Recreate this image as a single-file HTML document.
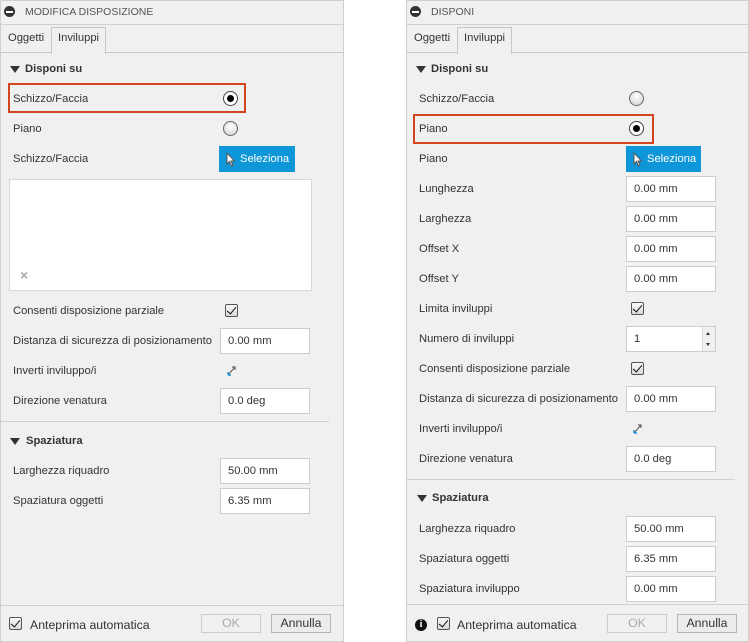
<!DOCTYPE html>
<html><head><meta charset="utf-8"><style>
*{box-sizing:border-box;margin:0;padding:0}
body{width:749px;height:642px;background:#fff;position:relative;overflow:hidden;font-family:"Liberation Sans",sans-serif;font-size:11.2px;color:#333}
.p{position:absolute;top:0;height:642px;background:#f0f0f0;border:1px solid #cfcfcf}
.a{position:absolute;white-space:nowrap}
.hl{position:absolute;height:1px;background:#d0d0d0}
.lbl{position:absolute;line-height:14px;white-space:nowrap}
.in{position:absolute;background:#fff;border:1px solid #cdcdcd;height:26px;line-height:24px;padding-left:7px;width:90px}
.rad{position:absolute;width:15px;height:15px;border-radius:50%;border:1px solid #666;background:radial-gradient(circle at 50% 35%,#fff,#d0d0d0)}
.rad.on{background:#fff;border:1px solid #444}
.rad.on:after{content:"";position:absolute;left:3px;top:3px;width:7px;height:7px;border-radius:50%;background:#000}
.cb{position:absolute;width:13px;height:13px;border:1px solid #555;border-radius:2px;background:linear-gradient(#fafafa,#d8d8d8)}
.cb:after{content:"";position:absolute;left:3px;top:0px;width:4px;height:8px;border-right:1.5px solid #111;border-bottom:1.5px solid #111;transform:rotate(40deg)}
.btn{position:absolute;height:26px;background:#0d96d8;color:#fff;font-size:11.2px;line-height:26px;padding-left:21px}
.red{position:absolute;border:2px solid #d4451f}
.tri{position:absolute;width:0;height:0;border-left:5px solid transparent;border-right:5px solid transparent;border-top:7px solid #333}
.b{font-weight:bold}
.fb{position:absolute;height:19px;border:1px solid #b5b5b5;text-align:center;line-height:17px;font-size:12.3px}
.t{font-size:10.5px;color:#555}
</style></head><body>

<!-- LEFT PANEL -->
<div class="p" style="left:0;width:344px"></div>
<div class="a" style="left:4px;top:6px;width:11px;height:11px;border-radius:50%;background:#333"></div>
<div class="a" style="left:6px;top:11px;width:7px;height:1.5px;background:#fff"></div>
<div class="lbl t" style="left:25px;top:5px">MODIFICA DISPOSIZIONE</div>
<div class="hl" style="left:1px;top:24px;width:342px"></div>
<div class="lbl" style="left:8px;top:31px">Oggetti</div>
<div class="a" style="left:51px;top:27px;width:55px;height:27px;border:1px solid #c8c8c8;border-bottom:none;background:#f0f0f0;z-index:2"></div>
<div class="lbl" style="left:58px;top:31px;z-index:3">Inviluppi</div>
<div class="hl" style="left:1px;top:52px;width:342px;background:#c8c8c8"></div>
<div class="tri" style="left:10px;top:66px"></div>
<div class="lbl b" style="left:25px;top:62px">Disponi su</div>
<div class="red" style="left:8px;top:83px;width:238px;height:30px"></div>
<div class="lbl" style="left:13px;top:92px">Schizzo/Faccia</div>
<div class="rad on" style="left:223px;top:91px"></div>
<div class="lbl" style="left:13px;top:122px">Piano</div>
<div class="rad" style="left:223px;top:121px"></div>
<div class="lbl" style="left:13px;top:152px">Schizzo/Faccia</div>
<div class="btn" style="left:219px;top:146px;width:76px"><svg style="position:absolute;left:7px;top:6px" width="10" height="15" viewBox="0 0 10 15"><path d="M1 1 L1 12 L3.5 9.5 L5.5 14 L7 13.3 L5 9 L8.5 9 Z" fill="#fff" stroke="#555" stroke-width="1"/></svg>Seleziona</div>
<div class="a" style="left:9px;top:179px;width:303px;height:112px;background:#fff;border:1px solid #d8d8d8"></div>
<div class="lbl" style="left:20px;top:268px;color:#aaa;font-size:14px;font-weight:bold">×</div>
<div class="lbl" style="left:13px;top:304px">Consenti disposizione parziale</div>
<div class="cb" style="left:225px;top:304px"></div>
<div class="lbl" style="left:13px;top:334px">Distanza di sicurezza di posizionamento</div>
<div class="in" style="left:220px;top:328px">0.00 mm</div>
<div class="lbl" style="left:13px;top:364px">Inverti inviluppo/i</div>
<svg class="a" style="left:225px;top:364px" width="12" height="14" viewBox="0 0 12 14"><path d="M3 11 L10 3 M7 3 L10 3 L10 6" stroke="#666" stroke-width="1.2" fill="none"/><path d="M3 11 L3 8 M3 11 L6 11" stroke="#1b8fe0" stroke-width="1.4" fill="none"/></svg>
<div class="lbl" style="left:13px;top:394px">Direzione venatura</div>
<div class="in" style="left:220px;top:388px">0.0 deg</div>
<div class="hl" style="left:1px;top:421px;width:328px"></div>
<div class="tri" style="left:10px;top:438px"></div>
<div class="lbl b" style="left:26px;top:434px">Spaziatura</div>
<div class="lbl" style="left:13px;top:464px">Larghezza riquadro</div>
<div class="in" style="left:220px;top:458px">50.00 mm</div>
<div class="lbl" style="left:13px;top:494px">Spaziatura oggetti</div>
<div class="in" style="left:220px;top:488px">6.35 mm</div>
<div class="hl" style="left:1px;top:605px;width:342px"></div>
<div class="cb" style="left:9px;top:617px"></div>
<div class="lbl" style="left:30px;top:618px;font-size:12.3px">Anteprima automatica</div>
<div class="fb" style="left:201px;top:614px;width:60px;color:#aaa;border-color:#ccc">OK</div>
<div class="fb" style="left:271px;top:614px;width:60px;background:#ececec">Annulla</div>

<!-- RIGHT PANEL -->
<div class="p" style="left:406px;width:343px"></div>
<div class="a" style="left:410px;top:6px;width:11px;height:11px;border-radius:50%;background:#333"></div>
<div class="a" style="left:412px;top:11px;width:7px;height:1.5px;background:#fff"></div>
<div class="lbl t" style="left:431px;top:5px">DISPONI</div>
<div class="hl" style="left:407px;top:24px;width:341px"></div>
<div class="lbl" style="left:414px;top:31px">Oggetti</div>
<div class="a" style="left:457px;top:27px;width:55px;height:27px;border:1px solid #c8c8c8;border-bottom:none;background:#f0f0f0;z-index:2"></div>
<div class="lbl" style="left:464px;top:31px;z-index:3">Inviluppi</div>
<div class="hl" style="left:407px;top:52px;width:341px;background:#c8c8c8"></div>
<div class="tri" style="left:416px;top:66px"></div>
<div class="lbl b" style="left:431px;top:62px">Disponi su</div>
<div class="lbl" style="left:419px;top:92px">Schizzo/Faccia</div>
<div class="rad" style="left:629px;top:91px"></div>
<div class="red" style="left:413px;top:114px;width:241px;height:30px"></div>
<div class="lbl" style="left:419px;top:122px">Piano</div>
<div class="rad on" style="left:629px;top:121px"></div>
<div class="lbl" style="left:419px;top:152px">Piano</div>
<div class="btn" style="left:626px;top:146px;width:75px"><svg style="position:absolute;left:7px;top:6px" width="10" height="15" viewBox="0 0 10 15"><path d="M1 1 L1 12 L3.5 9.5 L5.5 14 L7 13.3 L5 9 L8.5 9 Z" fill="#fff" stroke="#555" stroke-width="1"/></svg>Seleziona</div>
<div class="lbl" style="left:419px;top:182px">Lunghezza</div>
<div class="in" style="left:626px;top:176px">0.00 mm</div>
<div class="lbl" style="left:419px;top:212px">Larghezza</div>
<div class="in" style="left:626px;top:206px">0.00 mm</div>
<div class="lbl" style="left:419px;top:242px">Offset X</div>
<div class="in" style="left:626px;top:236px">0.00 mm</div>
<div class="lbl" style="left:419px;top:272px">Offset Y</div>
<div class="in" style="left:626px;top:266px">0.00 mm</div>
<div class="lbl" style="left:419px;top:302px">Limita inviluppi</div>
<div class="cb" style="left:631px;top:302px"></div>
<div class="lbl" style="left:419px;top:332px">Numero di inviluppi</div>
<div class="in" style="left:626px;top:326px">1</div>
<div class="a" style="left:702px;top:327px;width:13px;height:24px;background:#f0f0f0;border-left:1px solid #ddd"></div>
<div class="a" style="left:706px;top:332px;border-left:2.5px solid transparent;border-right:2.5px solid transparent;border-bottom:3px solid #333"></div>
<div class="a" style="left:706px;top:343px;border-left:2.5px solid transparent;border-right:2.5px solid transparent;border-top:3px solid #333"></div>
<div class="lbl" style="left:419px;top:362px">Consenti disposizione parziale</div>
<div class="cb" style="left:631px;top:362px"></div>
<div class="lbl" style="left:419px;top:392px">Distanza di sicurezza di posizionamento</div>
<div class="in" style="left:626px;top:386px">0.00 mm</div>
<div class="lbl" style="left:419px;top:422px">Inverti inviluppo/i</div>
<svg class="a" style="left:631px;top:422px" width="12" height="14" viewBox="0 0 12 14"><path d="M3 11 L10 3 M7 3 L10 3 L10 6" stroke="#666" stroke-width="1.2" fill="none"/><path d="M3 11 L3 8 M3 11 L6 11" stroke="#1b8fe0" stroke-width="1.4" fill="none"/></svg>
<div class="lbl" style="left:419px;top:452px">Direzione venatura</div>
<div class="in" style="left:626px;top:446px">0.0 deg</div>
<div class="hl" style="left:407px;top:479px;width:328px"></div>
<div class="tri" style="left:417px;top:495px"></div>
<div class="lbl b" style="left:432px;top:491px">Spaziatura</div>
<div class="lbl" style="left:419px;top:522px">Larghezza riquadro</div>
<div class="in" style="left:626px;top:516px">50.00 mm</div>
<div class="lbl" style="left:419px;top:552px">Spaziatura oggetti</div>
<div class="in" style="left:626px;top:546px">6.35 mm</div>
<div class="lbl" style="left:419px;top:582px">Spaziatura inviluppo</div>
<div class="in" style="left:626px;top:576px">0.00 mm</div>
<div class="hl" style="left:407px;top:604px;width:341px"></div>
<div class="a" style="left:415px;top:619px;width:12px;height:12px;border-radius:50%;background:#111;color:#fff;font-size:10px;font-weight:bold;text-align:center;line-height:12px;font-family:'Liberation Serif',serif">i</div>
<div class="cb" style="left:437px;top:617px"></div>
<div class="lbl" style="left:457px;top:618px;font-size:12.3px">Anteprima automatica</div>
<div class="fb" style="left:607px;top:614px;width:60px;color:#aaa;border-color:#ccc">OK</div>
<div class="fb" style="left:677px;top:614px;width:60px;background:#ececec">Annulla</div>
</body></html>
